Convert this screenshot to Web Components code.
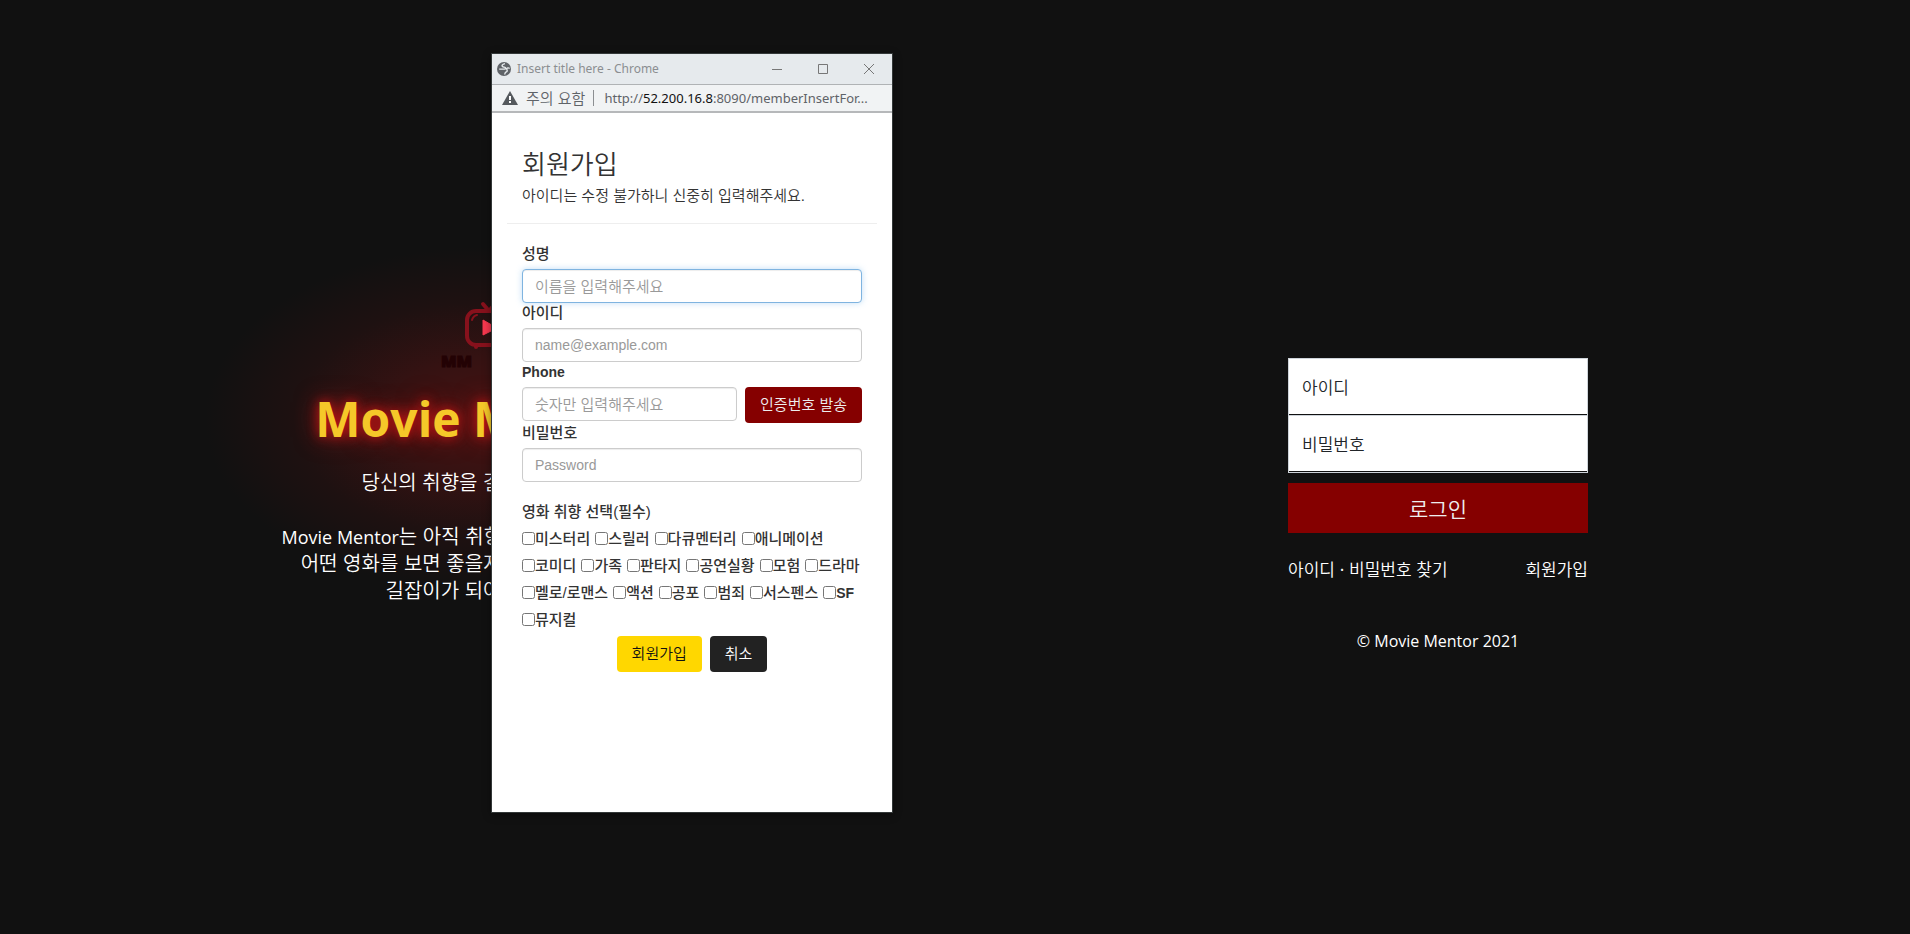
<!DOCTYPE html>
<html lang="ko">
<head>
<meta charset="utf-8">
<title>Movie Mentor</title>
<style>
  html, body { height: 100%; }
  body { margin: 0; background: #111; overflow: hidden; font-family: "Noto Sans", "Noto Sans CJK KR", sans-serif; }
</style>
</head>
<body>
<mm-page>
  <mm-intro slot="left"></mm-intro>
  <mm-login slot="right"></mm-login>
  <mm-window slot="popup" caption="Insert title here - Chrome"><mm-signup></mm-signup></mm-window>
</mm-page>

<script>
class Base extends HTMLElement {
  connectedCallback() {
    if (this.shadowRoot) return;
    this.attachShadow({ mode: "open" }).innerHTML = this.view();
  }
}

customElements.define("mm-page", class extends Base {
  view() { return `
  <style>
    :host { display: grid; grid-template-columns: 1fr 1fr; column-gap: 11px; padding-left: 11px; align-items: center; min-height: 100vh; position: relative; background: #111; }
    ::slotted([slot=popup]) { position: absolute; left: 491px; top: 53px; }
  </style>
  <slot name="left"></slot><slot name="right"></slot><slot name="popup"></slot>`; }
});

customElements.define("mm-intro", class extends Base {
  view() { return `
  <style>
    :host { display: flex; flex-direction: column; align-items: center; color: #fff; text-align: center; padding-bottom: 32px; isolation: isolate; }
    svg { display: block; width: 90px; height: 72px; position: relative; z-index: 1; }
    h1 { position: relative; margin: 15px 0 17px; font: 700 48px/64px "Open Sans", sans-serif; color: #f5c829;
         text-shadow: 0 0 12px #d01616, 0 0 24px #a01414; }
    h1::before { content: ""; position: absolute; inset: -140px -110px; z-index: -1;
         background: radial-gradient(closest-side, #471212, #351212 35%, #1e1111 68%, #111); }
    p { margin: 0 0 27px; font: 350 20px/27px "Noto Sans CJK KR", sans-serif; white-space: nowrap; }
    p:last-child { margin: 0; }
    span { font: 18px/20px "Open Sans", sans-serif; }
  </style>
  <svg viewBox="0 0 90 72" aria-hidden="true">
    <g fill="none" stroke="#87111c" stroke-width="4" stroke-linecap="round" stroke-linejoin="round">
      <rect x="29" y="11" width="42" height="34" rx="9"/>
      <path d="M45 4l6 7 6-7M38 46v1M62 46v1"/>
      <path d="M34 20q1-4 5-5" stroke-width="2"/>
    </g>
    <path d="M45 20l14 8-14 7z" fill="#f7384f" stroke="#f7384f" stroke-linejoin="round"/>
    <text x="3" y="67" font-family="Open Sans" font-weight="800" font-size="16" fill="#230204" stroke="#230204">MM</text>
  </svg>
  <h1>Movie Mentor</h1>
  <p>당신의 취향을 길잡아 드려요.</p>
  <p><span>Movie Mentor</span>는 아직 취향을 찾지 못한 당신에게<br>어떤 영화를 보면 좋을지 모르는 여러분에게,<br>길잡이가 되어드릴게요.</p>`; }
});

customElements.define("mm-login", class extends Base {
  view() { return `
  <style>
    :host { display: flex; flex-direction: column; width: 300px; justify-self: center; padding-top: 76px; font: 350 17px/24px "Noto Sans CJK KR", sans-serif; color: #fff; }
    input { box-sizing: border-box; width: 100%; height: 57px; display: block; margin: 0; border: 1px solid #ced4da; border-bottom: 0; border-radius: 0; padding: 0 13px; background: #fff; color: #212529; font: inherit; box-shadow: inset 0 -1px #111; outline: 0; }
    input + input { height: 58px; border-bottom: 1px solid #ced4da; }
    input::placeholder { color: #212529; opacity: 1; }
    button { height: 50px; margin: 10px 0 24px; border: 0; background: #850000; color: #eee; font: 350 21px/30px "Noto Sans CJK KR", sans-serif; }
    nav { display: flex; justify-content: space-between; }
    a { color: #fff; text-decoration: none; }
    footer { margin-top: 48px; text-align: center; font: 16px/24px "Open Sans", sans-serif; }
  </style>
  <input aria-label="아이디" placeholder="아이디"><input aria-label="비밀번호" type="password" placeholder="비밀번호">
  <button type="button">로그인</button>
  <nav><a href="#find">아이디 · 비밀번호 찾기</a><a href="#join">회원가입</a></nav>
  <footer>© Movie Mentor 2021</footer>`; }
});

customElements.define("mm-window", class extends Base {
  view() { return `
  <style>
    :host { display: flex; flex-direction: column; box-sizing: border-box; width: 402px; height: 760px; border: 1px solid #333838; background: #fff; box-shadow: 0 2px 8px #0006; }
    svg { flex: none; }
    header { display: flex; align-items: center; height: 30px; padding-left: 5px; background: #e6eaed; border-bottom: 1px solid #b0b3b5; color: #8b8e91; font: 12px/18px "Noto Sans", sans-serif; }
    header span { flex: 1; padding-left: 6px; }
    header button { width: 46px; height: 30px; padding: 0; border: 0; background: none; display: grid; place-items: center; }
    .bar { display: flex; align-items: center; height: 26px; padding: 0 10px; background: #f1f3f4; border-bottom: 2px solid #b6b8ba; color: #5f6368; font: 13px/20px "Noto Sans", sans-serif; white-space: nowrap; }
    .bar span { padding: 0 8px; font: 350 15px/20px "Noto Sans CJK KR", sans-serif; }
    .bar i { width: 1px; height: 16px; background: #8c8f92; }
    .bar div { padding-left: 10px; }
    b { font-weight: 400; color: #111; }
  </style>
  <header>
    <svg width="14" height="14" viewBox="0 0 14 14" aria-hidden="true"><circle cx="7" cy="7" r="7" fill="#5f6368"/><path d="M8 1.6C5 2 4.400 4 6 4.800c1 .5 2.500 0 2.700 1.200.1 1-1 1.200-2.200 1.100H2.200M12.600 6.500c-1.300-1.200-2.600-.6-2.800.4-.1 1 .8 1.400.2 2.400-.6 1-2 .5-2.300 3.200" fill="none" stroke="#e6eaed" stroke-width="1.400"/></svg>
    <span>${this.getAttribute("caption")}</span>
    <button type="button" aria-label="Minimize"><svg width="10" height="10"><path d="M0 5.5h10" stroke="#777"/></svg></button>
    <button type="button" aria-label="Maximize"><svg width="10" height="10"><path d="M.5.5h9v9h-9z" fill="none" stroke="#777"/></svg></button>
    <button type="button" aria-label="Close"><svg width="10" height="10"><path d="M0 0l10 10M10 0L0 10" stroke="#777"/></svg></button>
  </header>
  <div class="bar">
    <svg width="16" height="14" viewBox="0 0 16 14" aria-hidden="true"><path d="M8 0l8 14H0z" fill="#55595d"/><path d="M8 5v4M8 10v2" stroke="#fff" stroke-width="2"/></svg>
    <span>주의 요함</span><i></i>
    <div>http://<b>52.200.16.8</b>:8090/memberInsertFor...</div>
  </div>
  <slot></slot>`; }
});

customElements.define("mm-signup", class extends Base {
  view() {
    const rows = [["미스터리","스릴러","다큐멘터리","애니메이션"],["코미디","가족","판타지","공연실황","모험","드라마"],["멜로/로맨스","액션","공포","범죄","서스펜스","SF"],["뮤지컬"]];
    return `
  <style>
    :host { display: block; padding: 34px 15px 0; color: #333; font: 350 15px/20px "Liberation Sans", "Noto Sans CJK KR", sans-serif; }
    header { padding: 0 15px 17px; border-bottom: 1px solid #eee; }
    h1 { margin: 0 0 7px; font: 350 26px/32px "Noto Sans CJK KR", sans-serif; }
    p { margin: 0; }
    form { padding: 20px 15px 0; }
    label { font-weight: 500; }
    .field { display: block; height: 20px; margin-bottom: 5px; }
    .field.en { font-size: 14px; font-weight: 700; }
    input.box { display: block; box-sizing: border-box; width: 100%; height: 34px; margin: 0; padding: 0 12px; border: 1px solid #ccc; border-radius: 4px; background: #fff; box-shadow: inset 0 1px 1px #00000013; font: inherit; outline: 0; }
    input.en { font-size: 14px; }
    input.focus { border-color: #7fb4e0; box-shadow: inset 0 1px 1px #00000013, 0 0 6px #66afe966; }
    input::placeholder { color: #999; }
    .pair { display: flex; gap: 8px; }
    .pair input { flex: 1; min-width: 0; }
    button { height: 36px; padding: 0 15px; border: 0; border-radius: 4px; font: inherit; white-space: nowrap; background: #222; color: #fff; }
    .send { background: #850000; color: #eee; }
    .join { background: gold; color: #111; }
    fieldset { border: 0; margin: 20px 0 3px; padding: 0; }
    legend { padding: 0 0 3px; font-weight: 500; }
    .row { display: flex; gap: 5px; height: 27px; align-items: center; }
    .row label { display: flex; align-items: center; white-space: nowrap; }
    .row input { margin: 0; width: 13px; height: 13px; }
    .row .sf { font-size: 14px; font-weight: 700; }
    .actions { display: flex; justify-content: center; gap: 8px; }
  </style>
  <header><h1>회원가입</h1><p>아이디는 수정 불가하니 신중히 입력해주세요.</p></header>
  <form>
    <label class="field" for="n">성명</label><input class="box focus" id="n" placeholder="이름을 입력해주세요">
    <label class="field" for="i">아이디</label><input class="box en" id="i" placeholder="name@example.com">
    <label class="field en" for="p">Phone</label>
    <div class="pair"><input class="box" id="p" placeholder="숫자만 입력해주세요"><button class="send" type="button">인증번호 발송</button></div>
    <label class="field" for="w">비밀번호</label><input class="box en" id="w" type="password" placeholder="Password">
    <fieldset><legend>영화 취향 선택(필수)</legend>
    ${rows.map(r => `<div class="row">${r.map(t => `<label${t === "SF" ? ' class="sf"' : ""}><input type="checkbox">${t}</label>`).join("")}</div>`).join("")}
    </fieldset>
    <div class="actions"><button class="join" type="button">회원가입</button><button type="button">취소</button></div>
  </form>`; }
});
</script>
</body>
</html>
